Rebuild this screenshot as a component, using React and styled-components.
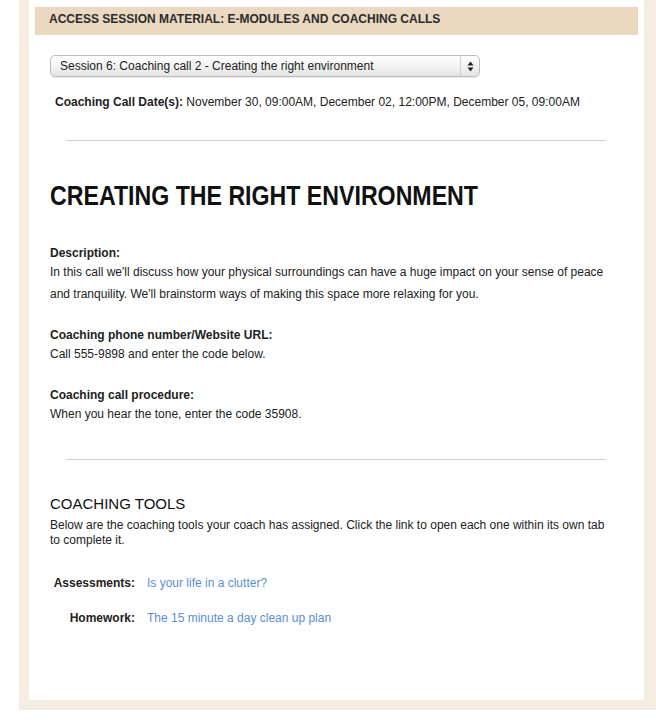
import React from "react";
import styled, { createGlobalStyle } from "styled-components";

const Global = createGlobalStyle`
  html, body { margin: 0; padding: 0; background: #ffffff; }
  body { font-family: "Liberation Sans", Arial, sans-serif; color: #222; }
`;

const Frame = styled.div`
  margin-left: 19px;
  width: 637px;
  box-sizing: border-box;
  background: #f5ede2;
  padding: 0 12px 10px 10px;
`;

const Panel = styled.div`
  background: #ffffff;
  padding: 7px 6px 0 6px;
  height: 700px;
  box-sizing: border-box;
  display: flex;
  flex-direction: column;
`;

const HeaderBar = styled.div`
  background: #ead8c0;
  height: 28px;
  box-sizing: border-box;
  padding: 0 0 3px 14px;
  line-height: 25px;
  font-size: 12px;
  font-weight: bold;
  color: #2b2b2b;
  text-transform: uppercase;
`;

const Content = styled.div`
  padding-left: 15px;
  display: flex;
  flex-direction: column;
`;

const SelectBox = styled.div`
  margin-top: 20px;
  width: 430px;
  height: 22px;
  box-sizing: border-box;
  border: 1px solid #bcbcbc;
  border-radius: 5px;
  background: linear-gradient(#ffffff, #f3f3f3 50%, #e4e4e4);
  box-shadow: 0 1px 1px rgba(0, 0, 0, 0.08);
  display: flex;
  align-items: center;
  font-size: 12px;
  color: #222;
`;

const SelectText = styled.div`
  flex: 1;
  padding-left: 9px;
  line-height: 20px;
`;

const SelectArrows = styled.div`
  width: 18px;
  height: 20px;
  border-left: 1px solid #d0d0d0;
  display: flex;
  align-items: center;
  justify-content: center;
`;

const Dates = styled.div`
  margin-top: 18px;
  padding-left: 5px;
  font-size: 12px;
  line-height: 15px;
  color: #222;
`;

const Bold = styled.span`
  font-weight: bold;
`;

const Rule = styled.hr`
  border: 0;
  border-top: 1px solid #cfcfcf;
  height: 0;
  margin: ${(p) => p.$top}px 32px 0 31px;
`;

const Title = styled.h1`
  margin: 39px 0 0 0;
  font-family: "Liberation Sans", Arial, sans-serif;
  font-weight: bold;
  font-size: 28px;
  line-height: 32px;
  color: #111;
  white-space: nowrap;
  transform: scaleX(0.827);
  transform-origin: left center;
`;

const Field = styled.div`
  margin-top: ${(p) => p.$top}px;
  font-size: 12px;
  max-width: 565px;
`;

const FieldLabel = styled.div`
  font-weight: bold;
  line-height: 16px;
  color: #222;
`;

const FieldBody = styled.div`
  line-height: 22px;
  color: #222;
`;

const ToolsHeading = styled.h2`
  margin: 35px 0 0 0;
  font-size: 15px;
  font-weight: normal;
  line-height: 18px;
  color: #111;
`;

const ToolsIntro = styled.p`
  margin: 5px 0 0 0;
  font-size: 12px;
  line-height: 15px;
  color: #222;
  max-width: 565px;
`;

const ToolsGrid = styled.div`
  margin-top: 28px;
  margin-left: 1px;
  display: grid;
  grid-template-columns: 84px auto;
  column-gap: 12px;
  row-gap: 20px;
  font-size: 12px;
  line-height: 15px;
`;

const ToolLabel = styled.div`
  font-weight: bold;
  text-align: right;
  color: #222;
`;

const ToolLink = styled.a`
  color: #5a8fd3;
  text-decoration: none;
  cursor: pointer;
`;

const Arrows = () => (
  <svg width="7" height="11" viewBox="0 0 7 11">
    <path d="M3.5 0.5 L6.5 4.5 L0.5 4.5 Z" fill="#222" />
    <path d="M3.5 10.5 L6.5 6.5 L0.5 6.5 Z" fill="#222" />
  </svg>
);

export default function App() {
  return (
    <>
      <Global />
      <Frame>
        <Panel>
          <HeaderBar>Access Session Material: E-Modules and Coaching Calls</HeaderBar>
          <Content>
            <SelectBox>
              <SelectText>Session 6: Coaching call 2 - Creating the right environment</SelectText>
              <SelectArrows>
                <Arrows />
              </SelectArrows>
            </SelectBox>
            <Dates>
              <Bold>Coaching Call Date(s):</Bold> November 30, 09:00AM, December 02, 12:00PM, December 05, 09:00AM
            </Dates>
          </Content>
          <Rule $top={30} />
          <Content>
            <Title>CREATING THE RIGHT ENVIRONMENT</Title>
            <Field $top={33}>
              <FieldLabel>Description:</FieldLabel>
              <FieldBody>
                In this call we'll discuss how your physical surroundings can have a huge impact on your sense of peace
                and tranquility. We'll brainstorm ways of making this space more relaxing for you.
              </FieldBody>
            </Field>
            <Field $top={22}>
              <FieldLabel>Coaching phone number/Website URL:</FieldLabel>
              <FieldBody>Call 555-9898 and enter the code below.</FieldBody>
            </Field>
            <Field $top={22}>
              <FieldLabel>Coaching call procedure:</FieldLabel>
              <FieldBody>When you hear the tone, enter the code 35908.</FieldBody>
            </Field>
          </Content>
          <Rule $top={34} />
          <Content>
            <ToolsHeading>COACHING TOOLS</ToolsHeading>
            <ToolsIntro>
              Below are the coaching tools your coach has assigned. Click the link to open each one within its own tab
              to complete it.
            </ToolsIntro>
            <ToolsGrid>
              <ToolLabel>Assessments:</ToolLabel>
              <ToolLink>Is your life in a clutter?</ToolLink>
              <ToolLabel>Homework:</ToolLabel>
              <ToolLink>The 15 minute a day clean up plan</ToolLink>
            </ToolsGrid>
          </Content>
        </Panel>
      </Frame>
    </>
  );
}
